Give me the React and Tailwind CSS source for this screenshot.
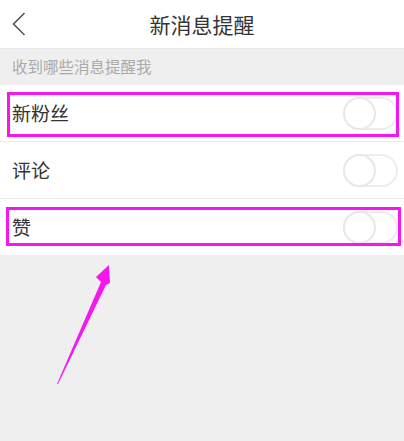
import React from "react";

const font = { fontFamily: '"Noto Sans CJK SC", "Noto Sans", sans-serif' };

function Toggle() {
  return (
    <div className="relative w-[55px] h-[33px] rounded-full border-2 border-[#ededed] bg-white">
      <div className="absolute left-[-2px] top-[-2px] w-[33px] h-[33px] rounded-full border-2 border-[#e8e8e8] bg-white" />
    </div>
  );
}

function Row({ label, last }) {
  return (
    <div
      className={
        "flex items-center justify-between pl-[12px] pr-[6px] bg-white " +
        (last ? "h-[56px]" : "h-[57px] border-b border-[#ececec]")
      }
    >
      <span className="text-[19px] text-[#333]">{label}</span>
      <Toggle />
    </div>
  );
}

export default function App() {
  return (
    <div className="relative w-[404px] h-[441px] bg-[#efefef] overflow-hidden" style={font}>
      <div className="relative h-[49px] bg-white flex items-center justify-center border-b border-[#e8e8e8]">
        <svg className="absolute left-[12px] top-[12px]" width="14" height="24" viewBox="0 0 14 24">
          <path d="M12.5 1 L1.5 12 L12.5 23" fill="none" stroke="#555" strokeWidth="1.6" />
        </svg>
        <span className="text-[21px] text-[#333] leading-none">新消息提醒</span>
      </div>
      <div className="h-[36px] flex items-center pl-[12px]">
        <span className="text-[15.5px] text-[#aaa]">收到哪些消息提醒我</span>
      </div>
      <Row label="新粉丝" />
      <Row label="评论" />
      <Row label="赞" last />

      <div className="absolute left-[7px] top-[92px] w-[392px] h-[45px] border-[3px] border-[#f516f0]" />
      <div className="absolute left-[6px] top-[207px] w-[395px] h-[39px] border-[3px] border-[#f516f0]" />

      <svg className="absolute left-0 top-0" width="404" height="441" viewBox="0 0 404 441">
        <polygon
          points="57,384 101,282 96,277 109,265 110,283 106,285 58,384"
          fill="#f516f0"
        />
      </svg>
    </div>
  );
}
